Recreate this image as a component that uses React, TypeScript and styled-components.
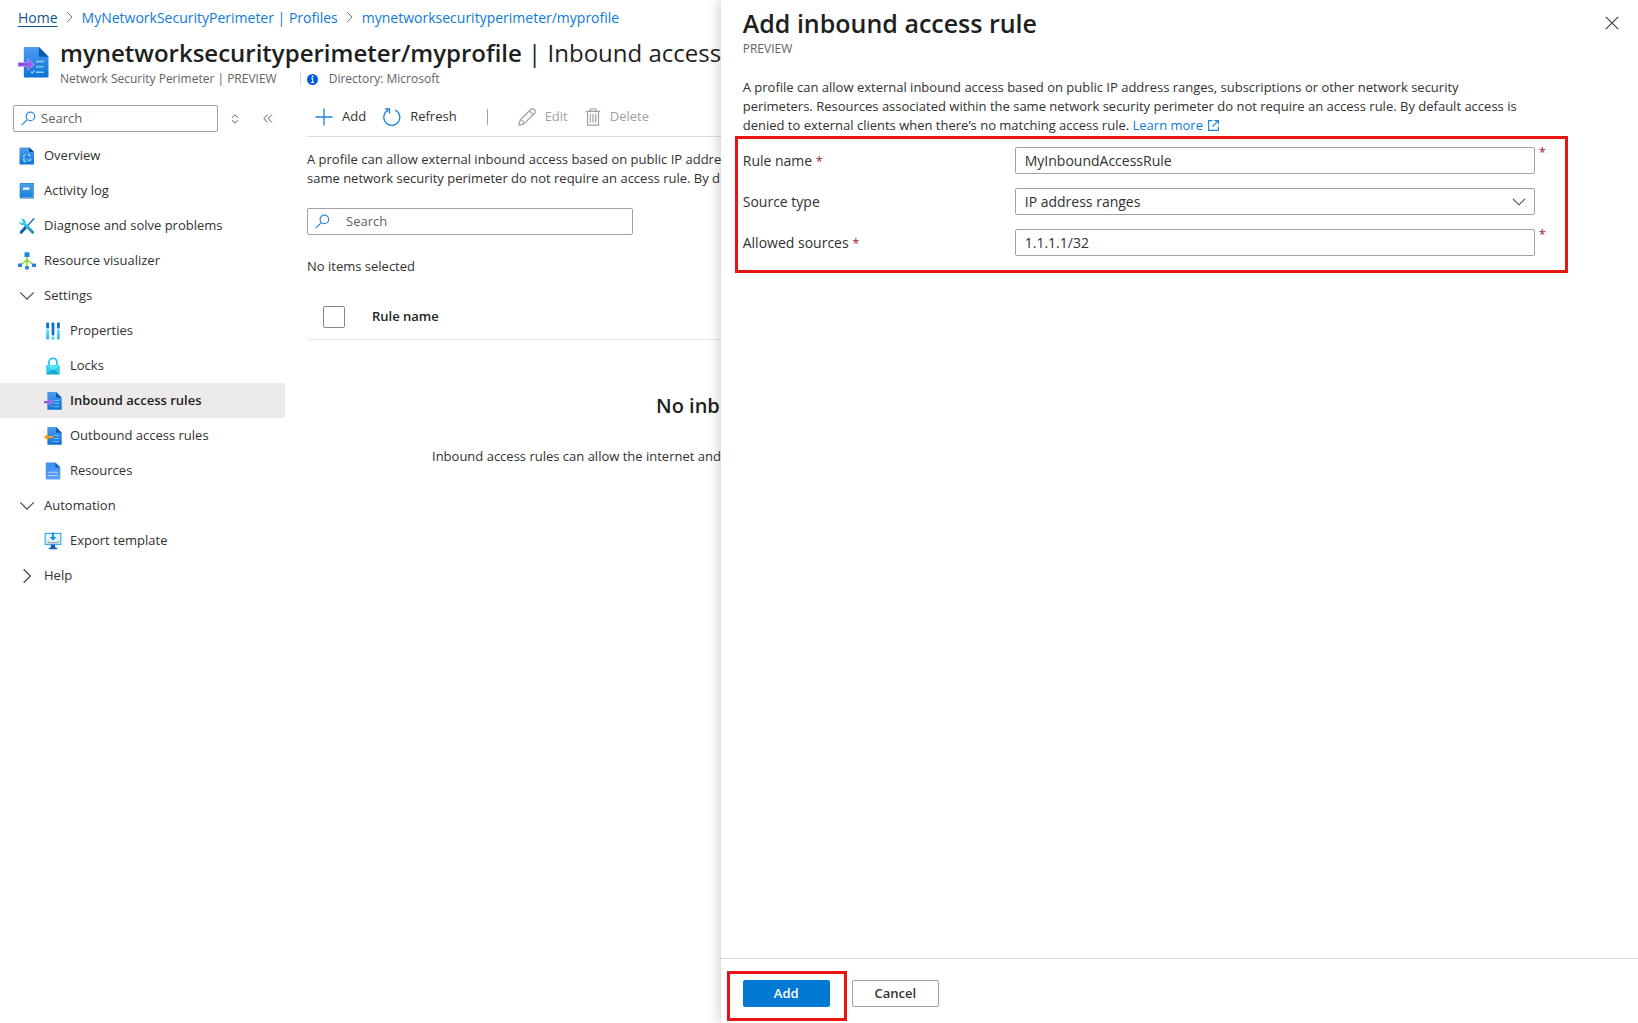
import React, { useState } from "react";
import styled, { createGlobalStyle } from "styled-components";

const color = {
  text: "#323130",
  strong: "#201f1e",
  muted: "#646260",
  link: "#0f7ad8",
  azure: "#0078d4",
  field: "#a3a2a1",
  line: "#dcdbda",
  faint: "#edebe9",
  disabled: "#a3a19f",
  required: "#a4262c",
  callout: "#e81313",
};

const GlobalStyle = createGlobalStyle`
  *, *::before, *::after { box-sizing: border-box; }
  body {
    margin: 0;
    background: #fff;
    color: ${color.text};
    font: 13px/19px "Open Sans", "Noto Sans", sans-serif;
  }
  button, input, select { font: inherit; color: inherit; }
`;

/* ---------- page ---------- */

const Shell = styled.div`
  display: flex;
  min-height: 100vh;
`;

const Page = styled.div`
  display: flex;
  flex: 1;
  flex-direction: column;
  min-width: 0;
  overflow: hidden;
`;

const Breadcrumbs = styled.nav`
  display: flex;
  align-items: center;
  gap: 8px;
  height: 34px;
  padding-left: 18px;
  font-size: 14px;
  white-space: nowrap;
`;

const Crumb = styled.a<{ $current?: boolean }>`
  color: ${(p) => (p.$current ? "#10548c" : color.link)};
  text-decoration: ${(p) => (p.$current ? "underline" : "none")};
  text-underline-offset: 3px;
`;

const PageHeader = styled.header`
  display: flex;
  gap: 11px;
  height: 58px;
  padding-left: 18px;
  white-space: nowrap;
`;

const HeaderIcon = styled.span`
  display: flex;
  padding-top: 13px;
`;

const PageTitle = styled.h1`
  margin: 0;
  color: ${color.strong};
  font-size: 24px;
  line-height: 38px;
  font-weight: 600;
`;

const TitleSection = styled.span`
  font-weight: 400;
`;

const Subtitle = styled.div`
  display: flex;
  align-items: center;
  height: 14px;
  color: ${color.muted};
  font-size: 12px;
  line-height: 14px;
`;

const Directory = styled.span`
  display: flex;
  align-items: center;
  gap: 11px;
  margin-left: 23px;
  padding-left: 6px;
  border-left: 1px solid ${color.line};
`;

const Columns = styled.div`
  display: flex;
  flex: 1;
`;

/* ---------- side menu ---------- */

const Sidebar = styled.aside`
  flex: none;
  width: 285px;
  padding-top: 13px;
`;

const SidebarTools = styled.div`
  display: flex;
  align-items: center;
  gap: 5px;
  margin-bottom: 6px;
  padding-left: 13px;
`;

const ToolGroup = styled.div`
  display: flex;
  gap: 10px;
`;

const SearchBox = styled.label<{ $width: number; $gap: number }>`
  display: flex;
  align-items: center;
  gap: ${(p) => p.$gap}px;
  width: ${(p) => p.$width}px;
  height: 27px;
  padding: 0 7px;
  border: 1px solid ${color.field};
  border-radius: 2px;
`;

const SearchInput = styled.input`
  flex: 1;
  min-width: 0;
  padding: 0;
  border: 0;
  outline: 0;
  background: none;
  &::placeholder { color: ${color.muted}; opacity: 1; }
`;

const IconButton = styled.button`
  display: flex;
  align-items: center;
  justify-content: center;
  width: 23px;
  height: 24px;
  padding: 0;
  border: 0;
  background: none;
  color: #605e5c;
`;

const Menu = styled.ul`
  margin: 0;
  padding: 0;
  list-style: none;
`;

const MenuLink = styled.a<{ $nested?: boolean; $selected?: boolean }>`
  display: flex;
  align-items: center;
  gap: 8px;
  height: 35px;
  padding-left: ${(p) => (p.$nested ? 44 : 18)}px;
  background: ${(p) => (p.$selected ? "#edebe9" : "none")};
  color: ${(p) => (p.$selected ? color.strong : color.text)};
  font-weight: ${(p) => (p.$selected ? 600 : 400)};
  text-decoration: none;
`;

const MenuGroup = styled(MenuLink).attrs({ as: "button" })`
  width: 100%;
  border: 0;
  text-align: left;
`;

/* ---------- content ---------- */

const Main = styled.main`
  flex: 1;
  min-width: 0;
  padding: 6px 0 0 22px;
`;

const Toolbar = styled.div`
  display: flex;
  align-items: center;
  height: 39px;
  padding: 0 0 1px 8px;
  border-bottom: 1px solid ${color.line};
`;

const ToolbarButton = styled.button`
  display: flex;
  align-items: center;
  gap: 9px;
  margin-right: 17px;
  padding: 0;
  border: 0;
  background: none;
  color: ${color.text};
  &:disabled { color: ${color.disabled}; }
`;

const ToolbarDivider = styled.span`
  width: 1px;
  height: 16px;
  margin: 0 30px 0 13px;
  background: ${color.field};
`;

const Intro = styled.p`
  margin: 13px 0 20px;
  white-space: nowrap;
`;

const Selection = styled.p`
  margin: 22px 0 19px;
`;

const RuleTable = styled.table`
  width: 100%;
  border-collapse: collapse;
`;

const HeadCell = styled.th<{ $width?: number }>`
  width: ${(p) => (p.$width ? `${p.$width}px` : "auto")};
  height: 44px;
  padding: 0 0 0 16px;
  border-bottom: 1px solid ${color.faint};
  color: ${color.strong};
  font-weight: 600;
  text-align: left;
`;

const Tick = styled.input`
  display: block;
  appearance: none;
  width: 22px;
  height: 22px;
  margin: 0;
  border: 1px solid #8a8886;
  border-radius: 2px;
`;

const Empty = styled.section`
  display: flex;
  flex-direction: column;
  gap: 27px;
  padding: 52px 0 0 125px;
  white-space: nowrap;
`;

const EmptyTitle = styled.h2`
  margin: 0;
  padding-left: 224px;
  color: ${color.strong};
  font-size: 20px;
  line-height: 28px;
  font-weight: 600;
`;

const EmptyText = styled.p`
  margin: 0;
`;

/* ---------- flyout ---------- */

const Flyout = styled.section`
  display: flex;
  flex-direction: column;
  width: 56%;
  background: #fff;
  box-shadow: 0 0 14px rgba(0, 0, 0, 0.24);
  z-index: 1;
`;

const FlyoutHeader = styled.header`
  display: flex;
  justify-content: space-between;
  align-items: flex-start;
  height: 78px;
  padding: 4px 15px 0 22px;
`;

const FlyoutTitle = styled.h2`
  margin: 0;
  color: ${color.strong};
  font-size: 25px;
  line-height: 38px;
  font-weight: 600;
`;

const FlyoutTag = styled.p`
  margin: 0;
  color: ${color.muted};
  font-size: 12px;
  line-height: 14px;
`;

const CloseButton = styled(IconButton)`
  height: 38px;
`;

const FlyoutBody = styled.div`
  flex: 1;
  padding: 0 70px 0 22px;
`;

const Description = styled.p`
  max-width: 784px;
  margin: 0;
`;

const LearnMore = styled.a`
  color: ${color.link};
  text-decoration: none;
  svg { margin-left: 2px; vertical-align: -1px; }
`;

const Callout = styled.div`
  border: 3px solid ${color.callout};
`;

const FieldList = styled(Callout)`
  display: flex;
  flex-direction: column;
  gap: 14px;
  margin: 1px 0 0 -8px;
  padding: 8px 30px 14px 5px;
  font-size: 14px;
`;

const FieldRow = styled.div`
  position: relative;
  display: grid;
  grid-template-columns: 272px 1fr;
  align-items: center;
`;

const Required = styled.span`
  color: ${color.required};
  font-size: 13px;
`;

const RowMark = styled(Required)`
  position: absolute;
  top: -4px;
  right: -11px;
`;

const TextField = styled.input`
  width: 100%;
  height: 27px;
  padding: 0 9px;
  border: 1px solid ${color.field};
  border-radius: 2px;
  background: #fff;
`;

const SelectWrap = styled.div`
  position: relative;
  display: flex;
`;

const SelectField = styled(TextField).attrs({ as: "select" })`
  appearance: none;
`;

const SelectArrow = styled.span`
  position: absolute;
  top: 6px;
  right: 8px;
  display: flex;
  pointer-events: none;
`;

const FlyoutFooter = styled.footer`
  display: flex;
  align-items: flex-start;
  gap: 5px;
  height: 65px;
  padding: 12px 0 0 6px;
  border-top: 1px solid ${color.line};
`;

const PrimaryCallout = styled(Callout)`
  display: flex;
  padding: 6px 14px 11px 13px;
`;

const ActionButton = styled.button<{ $primary?: boolean }>`
  width: 87px;
  height: 27px;
  padding: 0;
  border: 1px solid ${(p) => (p.$primary ? color.azure : color.field)};
  border-radius: 2px;
  background: ${(p) => (p.$primary ? color.azure : "#fff")};
  color: ${(p) => (p.$primary ? "#fff" : color.text)};
  font-weight: 600;
`;

const FooterAside = styled.div`
  display: flex;
  padding-top: 9px;
`;

/* ---------- icons ---------- */

const Chevron = ({ dir = "down", size = 16 }: { dir?: "down" | "right"; size?: number }) => (
  <svg width={size} height={size} viewBox="0 0 16 16" fill="none" stroke="#4a4846" strokeWidth="1.1">
    <path d={dir === "down" ? "M2 4.8 8 10.8l6-6" : "M5 2l6 6-6 6"} />
  </svg>
);

const CrumbArrow = () => (
  <svg width="8" height="12" viewBox="0 0 8 12" fill="none" stroke="#797775" strokeWidth="1">
    <path d="M1 1l5 5-5 5" />
  </svg>
);

const SearchIcon = () => (
  <svg width="15" height="15" viewBox="0 0 15 15" fill="none" stroke="#2b88d8" strokeWidth="1.2">
    <circle cx="9.4" cy="5.4" r="4.3" />
    <path d="M6.3 8.6.7 14.2" />
  </svg>
);

const SortIcon = () => (
  <svg width="8" height="10" viewBox="0 0 8 10" fill="none" stroke="currentColor" strokeWidth="1">
    <path d="M1 3.8 4 .8l3 3M1 6.2l3 3 3-3" />
  </svg>
);

const CollapseIcon = () => (
  <svg width="10" height="9" viewBox="0 0 10 9" fill="none" stroke="currentColor" strokeWidth="1">
    <path d="M4.6.6.9 4.5l3.7 3.9M8.9.6 5.2 4.5l3.7 3.9" />
  </svg>
);

const CloseIcon = () => (
  <svg width="14" height="14" viewBox="0 0 14 14" fill="none" stroke="#3b3a39" strokeWidth="1.1">
    <path d="M.8.8l12.4 12.4M13.2.8.8 13.2" />
  </svg>
);

const InfoIcon = () => (
  <svg width="11" height="11" viewBox="0 0 11 11">
    <circle cx="5.5" cy="5.5" r="5.5" fill="#015cda" />
    <circle cx="5.5" cy="2.6" r="1" fill="#fff" />
    <path d="M4.2 4.8h1.5v3.6M4 8.5h3.200" fill="none" stroke="#fff" strokeWidth="1.1" />
  </svg>
);

const AddIcon = () => (
  <svg width="18" height="18" viewBox="0 0 18 18" stroke="#1a82da" strokeWidth="1.3">
    <path d="M9 .5v17M.5 9h17" />
  </svg>
);

const RefreshIcon = () => (
  <svg width="18" height="18" viewBox="0 0 18 18" fill="none" stroke="#1a82da" strokeWidth="1.3">
    <path d="M12 2a8 8 0 1 1-6.600.1" />
    <path d="M2 1h4.500v4.500" />
  </svg>
);

const EditIcon = () => (
  <svg width="18" height="18" viewBox="0 0 18 18" fill="none" stroke="#a19f9d" strokeWidth="1.2" strokeLinejoin="round">
    <path d="M.9 17.1 2.2 12 13 1.3a2 2 0 0 1 2.8 0l.9.9a2 2 0 0 1 0 2.8L6 15.8z" />
    <path d="M11.4 2.9l3.7 3.7M2.2 12c1.9.2 3.6 1.9 3.8 3.8" />
  </svg>
);

const DeleteIcon = () => (
  <svg width="16" height="18" viewBox="0 0 16 18" fill="none" stroke="#a19f9d" strokeWidth="1.2">
    <path d="M.8 3.3h14.4M5.3 3.3V1h5.4v2.3M2.5 3.3v13.8h11V3.3M5.3 6v8.6M8 6v8.6M10.7 6v8.6" />
  </svg>
);

const ExternalIcon = () => (
  <svg width="11" height="11" viewBox="0 0 11 11" fill="none" stroke="#1a82da" strokeWidth="1.1">
    <path d="M4.5.6H.6v9.8h9.8V6.5M6.4.6h4v4M10.2.8 4.5 6.5" />
  </svg>
);

const Gradients = () => (
  <svg width="0" height="0" display="block" aria-hidden="true">
    <defs>
      <linearGradient id="doc" x1="0" y1="0" x2="0" y2="1">
        <stop offset="0" stopColor="#4f9df0" />
        <stop offset="1" stopColor="#0c72d4" />
      </linearGradient>
      <linearGradient id="lightDoc" x1="0" y1="0" x2="0" y2="1">
        <stop offset="0" stopColor="#3f8cf0" />
        <stop offset="1" stopColor="#5ea0f5" />
      </linearGradient>
      <linearGradient id="book" x1="0" y1="0" x2="0" y2="1">
        <stop offset="0" stopColor="#45a6ee" />
        <stop offset="1" stopColor="#1c80d6" />
      </linearGradient>
      <linearGradient id="teal" x1="0" y1="0" x2="0" y2="1">
        <stop offset="0" stopColor="#32d4f5" />
        <stop offset="1" stopColor="#198ab3" />
      </linearGradient>
      <linearGradient id="violet" x1="0" y1="0" x2="1" y2="0">
        <stop offset="0" stopColor="#7a46e0" />
        <stop offset="1" stopColor="#a765f0" />
      </linearGradient>
      <linearGradient id="slider" x1="0" y1="0" x2="0" y2="1">
        <stop offset="0" stopColor="#5ee8fb" />
        <stop offset="1" stopColor="#27b4dc" />
      </linearGradient>
    </defs>
  </svg>
);

const AccessRuleIcon = ({ size = 18, outbound = false }: { size?: number; outbound?: boolean }) => (
  <svg width={size} height={size} viewBox="0 0 32 32">
    <path d="M7 0h14.500L31.500 10v20.500a1 1 0 0 1-1 1H7a1 1 0 0 1-1-1V1a1 1 0 0 1 1-1z" fill="url(#doc)" />
    <path d="M21.500 0l10 10h-9a1 1 0 0 1-1-1z" fill="#0a57b5" />
    <path d="M18.500 15h8M18.500 20.500h8M18.500 26h8" stroke="#8fd0ff" strokeWidth="1.500" />
    <path d="M13.500 25.500l1.300 1.400 2.200-2.800" fill="none" stroke="#8fd0ff" strokeWidth="1.200" />
    {outbound ? (
      <path d="M0 18l7-6.200v4.200h9.500v4H7v4.200z" fill="#ff9a1f" />
    ) : (
      <path
        d="M0 16h10v-4l6.800 6-6.800 6v-4H0z"
        fill="url(#violet)"
        stroke="#d8b8ff"
        strokeWidth=".6"
      />
    )}
  </svg>
);

const OverviewIcon = () => (
  <svg width="18" height="18" viewBox="0 0 18 18">
    <path d="M2.500.5h8.800L16 5v12.500H2.500a1 1 0 0 1-1-1v-15a1 1 0 0 1 1-1z" fill="url(#doc)" />
    <path d="M11.300.5 16 5h-4.700z" fill="#0b4794" />
    <g fill="none" stroke="#7fe0fb" strokeWidth="1.500">
      <path d="M5 9.500 7.600 7.500M10 7l2.500 2.200M13 11.500 11.500 14.500M8.300 15.200 5.200 13.300M4.800 12l2.500-.6M9.600 11.800l.4 2" />
    </g>
  </svg>
);

const ActivityIcon = () => (
  <svg width="18" height="18" viewBox="0 0 18 18">
    <path d="M3 1h12a1 1 0 0 1 1 1v14.500H3a1.300 1.300 0 0 1-1.300-1.300V2.300A1.300 1.300 0 0 1 3 1z" fill="#1b74cc" />
    <path d="M3 15.300h12v.6H3z" fill="#8cc6f4" />
    <path d="M2.200 1.500h12.300v13.500H2.200z" fill="url(#book)" />
    <path d="M14.800 2h.7v13.500h-.7z" fill="#9fd2f8" />
    <rect x="5" y="5.500" width="6.500" height="2.200" rx=".4" fill="#fff" />
  </svg>
);

const DiagnoseIcon = () => (
  <svg width="18" height="18" viewBox="0 0 18 18" fill="none">
    <path d="M15.800 1.800 10 8.200" stroke="#1a6fb5" strokeWidth="1.400" strokeLinecap="round" />
    <path d="M8 10 3.200 15.300" stroke="#0b62a8" strokeWidth="3" strokeLinecap="round" />
    <path d="M5.800 6.300l8.900 9" stroke="url(#teal)" strokeWidth="2.800" strokeLinecap="round" />
    <path d="M2.800 2.200 5 4.400 4.700 6l-1.500.2L1.200 4.300C.9 6.600 3 8.600 5.500 7.800L7.600 6.300C8.500 3.600 5.500.9 2.800 2.200z" fill="#35c6ee" />
  </svg>
);

const VisualizerIcon = () => (
  <svg width="18" height="18" viewBox="0 0 18 18">
    <path d="M9 4v11M9 7.500 2.800 13M9 7.500 15.200 13" stroke="#86d633" strokeWidth="1.300" fill="none" />
    <g fill="#1e82e0">
      <rect x="6.500" y=".3" width="5" height="4.800" rx=".6" />
      <rect x="0" y="11.500" width="4" height="3.600" rx=".6" />
      <rect x="14" y="11.500" width="4" height="3.600" rx=".6" />
      <rect x="7.200" y="14" width="3.600" height="3.600" rx=".6" />
    </g>
    <circle cx="9" cy="9.500" r="1.300" fill="#86d633" />
  </svg>
);

const PropertiesIcon = () => (
  <svg width="18" height="18" viewBox="0 0 18 18">
    <g fill="url(#slider)">
      <rect x="2.200" y="7.500" width="2.800" height="10" rx=".7" />
      <rect x="7.600" y="14.500" width="2.800" height="3" rx=".7" />
      <rect x="13" y="7.500" width="2.800" height="10" rx=".7" />
    </g>
    <g fill="#0f6fce">
      <rect x="2.200" y=".5" width="2.800" height="6" rx=".7" />
      <rect x="7.600" y=".5" width="2.800" height="13" rx=".7" />
      <rect x="13" y=".5" width="2.800" height="6" rx=".7" />
    </g>
  </svg>
);

const LockIcon = () => (
  <svg width="18" height="18" viewBox="0 0 18 18">
    <path d="M5 9V5.300a4 4 0 0 1 8 0V9" fill="none" stroke="#2cc3e8" strokeWidth="1.800" />
    <rect x="2.200" y="8" width="13.600" height="9.600" rx=".8" fill="#32cdf0" />
    <path d="M2.300 17.300 9 11.800l6.700 5.500z" fill="#1fa9cf" />
    <path d="M2.300 8.300 9 13.300l6.700-5z" fill="#5be0f8" />
  </svg>
);

const ResourcesIcon = () => (
  <svg width="18" height="18" viewBox="0 0 18 18">
    <path d="M2.500.5h8.800l5 4.900v11.100a1 1 0 0 1-1 1H2.500a.8.8 0 0 1-.8-.8V1.300a.8.8 0 0 1 .8-.8z" fill="url(#lightDoc)" />
    <path d="M11.300.5l5 4.900h-4.200a.8.8 0 0 1-.8-.8z" fill="#0b5cc4" />
    <path d="M4.300 10.300h9.400M4.300 13.500h9.400" stroke="#b6d8ff" strokeWidth="1" />
  </svg>
);

const ExportIcon = () => (
  <svg width="18" height="18" viewBox="0 0 18 18">
    <rect x="1.200" y="1.400" width="15.600" height="11" fill="#e8f5fd" stroke="#3fa9ea" strokeWidth="1.200" />
    <path d="M7 12.800h4l.5 3h1.700v1.400H4.800v-1.400h1.700z" fill="#1b60b8" />
    <path d="M4 8.500v2.200h10V8.500" fill="none" stroke="#8a98a4" strokeWidth="1" />
    <path d="M8 .5h2v4.600h2.300L9 8.800 5.700 5.100H8z" fill="#1593e0" />
  </svg>
);

/* ---------- app ---------- */

const App = () => {
  const [name, setName] = useState("MyInboundAccessRule");
  const [sources, setSources] = useState("1.1.1.1/32");

  return (
    <>
      <GlobalStyle />
      <Gradients />
      <Shell>
        <Page>
          <Breadcrumbs aria-label="Breadcrumb">
            <Crumb href="#" $current>Home</Crumb>
            <CrumbArrow />
            <Crumb href="#">MyNetworkSecurityPerimeter | Profiles</Crumb>
            <CrumbArrow />
            <Crumb href="#">mynetworksecurityperimeter/myprofile</Crumb>
          </Breadcrumbs>

          <PageHeader>
            <HeaderIcon><AccessRuleIcon size={31} /></HeaderIcon>
            <div>
              <PageTitle>
                mynetworksecurityperimeter/myprofile <TitleSection>| Inbound access</TitleSection>
              </PageTitle>
              <Subtitle>
                Network Security Perimeter | PREVIEW
                <Directory><InfoIcon />Directory: Microsoft</Directory>
              </Subtitle>
            </div>
          </PageHeader>

          <Columns>
            <Sidebar>
              <SidebarTools>
                <SearchBox $width={205} $gap={5}>
                  <SearchIcon />
                  <SearchInput type="text" placeholder="Search" aria-label="Search menu" />
                </SearchBox>
                <ToolGroup>
                  <IconButton aria-label="Sort menu"><SortIcon /></IconButton>
                  <IconButton aria-label="Collapse menu"><CollapseIcon /></IconButton>
                </ToolGroup>
              </SidebarTools>
              <Menu>
                <li><MenuLink href="#"><OverviewIcon />Overview</MenuLink></li>
                <li><MenuLink href="#"><ActivityIcon />Activity log</MenuLink></li>
                <li><MenuLink href="#"><DiagnoseIcon />Diagnose and solve problems</MenuLink></li>
                <li><MenuLink href="#"><VisualizerIcon />Resource visualizer</MenuLink></li>
                <li><MenuGroup><Chevron size={18} />Settings</MenuGroup></li>
                <li><MenuLink href="#" $nested><PropertiesIcon />Properties</MenuLink></li>
                <li><MenuLink href="#" $nested><LockIcon />Locks</MenuLink></li>
                <li><MenuLink href="#" $nested $selected><AccessRuleIcon />Inbound access rules</MenuLink></li>
                <li><MenuLink href="#" $nested><AccessRuleIcon outbound />Outbound access rules</MenuLink></li>
                <li><MenuLink href="#" $nested><ResourcesIcon />Resources</MenuLink></li>
                <li><MenuGroup><Chevron size={18} />Automation</MenuGroup></li>
                <li><MenuLink href="#" $nested><ExportIcon />Export template</MenuLink></li>
                <li><MenuGroup><Chevron dir="right" size={18} />Help</MenuGroup></li>
              </Menu>
            </Sidebar>

            <Main>
              <Toolbar>
                <ToolbarButton><AddIcon />Add</ToolbarButton>
                <ToolbarButton><RefreshIcon />Refresh</ToolbarButton>
                <ToolbarDivider />
                <ToolbarButton disabled><EditIcon />Edit</ToolbarButton>
                <ToolbarButton disabled><DeleteIcon />Delete</ToolbarButton>
              </Toolbar>
              <Intro>
                A profile can allow external inbound access based on public IP addre
                <br />
                same network security perimeter do not require an access rule. By d
              </Intro>
              <SearchBox $width={326} $gap={16}>
                <SearchIcon />
                <SearchInput type="text" placeholder="Search" aria-label="Search rules" />
              </SearchBox>
              <Selection>No items selected</Selection>
              <RuleTable>
                <thead>
                  <tr>
                    <HeadCell $width={49}><Tick type="checkbox" aria-label="Select all rules" /></HeadCell>
                    <HeadCell>Rule name</HeadCell>
                  </tr>
                </thead>
              </RuleTable>
              <Empty>
                <EmptyTitle>No inb</EmptyTitle>
                <EmptyText>Inbound access rules can allow the internet and</EmptyText>
              </Empty>
            </Main>
          </Columns>
        </Page>

        <Flyout role="dialog" aria-labelledby="flyout-title">
          <FlyoutHeader>
            <div>
              <FlyoutTitle id="flyout-title">Add inbound access rule</FlyoutTitle>
              <FlyoutTag>PREVIEW</FlyoutTag>
            </div>
            <CloseButton aria-label="Close"><CloseIcon /></CloseButton>
          </FlyoutHeader>
          <FlyoutBody>
            <Description>
              A profile can allow external inbound access based on public IP address ranges, subscriptions or other
              network security perimeters. Resources associated within the same network security perimeter do not
              require an access rule. By default access is denied to external clients when there’s no matching access
              rule. <LearnMore href="#">Learn more <ExternalIcon /></LearnMore>
            </Description>
            <FieldList>
              <FieldRow>
                <label htmlFor="rule-name">Rule name <Required>*</Required></label>
                <TextField id="rule-name" value={name} onChange={(e) => setName(e.target.value)} />
                <RowMark aria-hidden="true">*</RowMark>
              </FieldRow>
              <FieldRow>
                <label htmlFor="source-type">Source type</label>
                <SelectWrap>
                  <SelectField id="source-type">
                    <option>IP address ranges</option>
                  </SelectField>
                  <SelectArrow><Chevron /></SelectArrow>
                </SelectWrap>
              </FieldRow>
              <FieldRow>
                <label htmlFor="allowed-sources">Allowed sources <Required>*</Required></label>
                <TextField id="allowed-sources" value={sources} onChange={(e) => setSources(e.target.value)} />
                <RowMark aria-hidden="true">*</RowMark>
              </FieldRow>
            </FieldList>
          </FlyoutBody>
          <FlyoutFooter>
            <PrimaryCallout>
              <ActionButton $primary>Add</ActionButton>
            </PrimaryCallout>
            <FooterAside>
              <ActionButton>Cancel</ActionButton>
            </FooterAside>
          </FlyoutFooter>
        </Flyout>
      </Shell>
    </>
  );
};

export default App;
